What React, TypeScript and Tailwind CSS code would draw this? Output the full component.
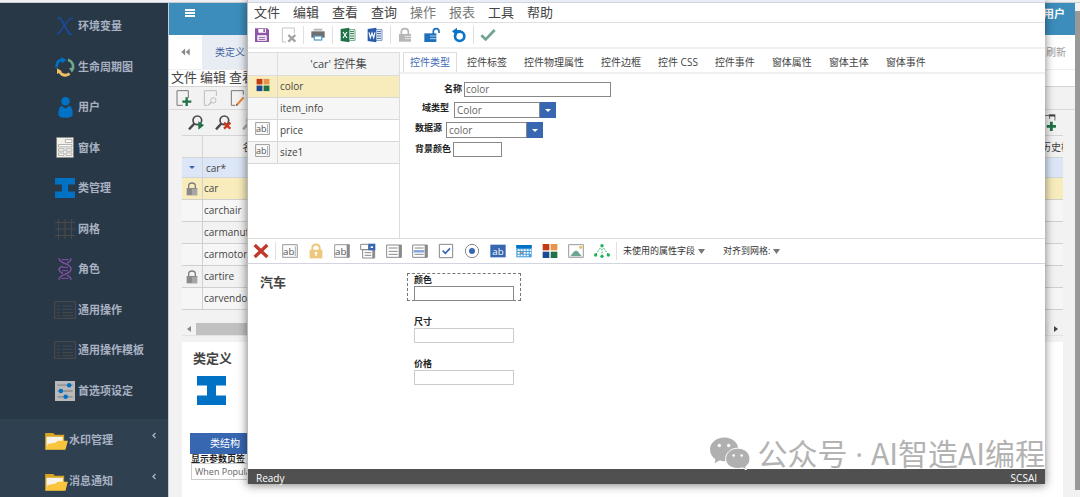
import React from 'react';
import { FaAngleLeft } from 'react-icons/fa';

type IconProps = { className?: string };

/* ---------- sidebar icons ---------- */

const VariableIcon = () => (
  <svg viewBox="0 0 54 54" className="h-[18px] w-[18px]" fill="none" stroke="#1b4a94">
    <path d="M5 5c5-4 9-2 11 3l22 40c3 5 7 5 11 2" strokeWidth="6" />
    <path d="M52 3c-8 0-14 3-20 13L18 36C12 46 9 51 2 51" strokeWidth="4.5" />
  </svg>
);
const CycleIcon = () => (
  <svg viewBox="0 0 60 60" className="h-5 w-5">
    <g fill="none" strokeWidth="8">
      <path d="M5 31C4 18 11 10 22 8" stroke="#0072c6" />
      <path d="M39 8c14 5 18 18 13 30" stroke="#6fa88c" />
      <path d="M44 50c-12 8-23 5-31-6" stroke="#edbf65" />
    </g>
    <path d="M19 0l15 9-13 10z" fill="#0072c6" />
    <path d="M42 33l17-1-8 15z" fill="#6fa88c" />
    <path d="M6 51V34l15 9z" fill="#edbf65" />
  </svg>
);
const UserIcon = () => (
  <svg viewBox="0 0 44 64" className="h-[21px] w-[15px]" fill="#0072c6">
    <circle cx="22" cy="13" r="13" />
    <path d="M10 27l12 8 12-8c6 2 10 12 10 26 0 14-44 14-44 0 0-14 4-24 10-26z" />
  </svg>
);
const FormIcon = () => (
  <svg viewBox="0 0 54 64" className="h-[21px] w-[18px]">
    <path d="M1 1h52v62H1z" fill="#f2f0ea" stroke="#77736a" strokeWidth="2" />
    <g fill="#fff" stroke="#8d8c88" strokeWidth="2">
      <path d="M28 8h20v9H28zM7 23h41v7H7zM7 36h17v7H7zM30 36h18v7H30zM7 49h17v7H7zM30 49h18v7H30z" />
    </g>
  </svg>
);
const BeamIcon = ({ className = 'h-5 w-5' }: IconProps) => (
  <svg viewBox="0 0 58 58" className={className} fill="#0072c6" preserveAspectRatio="none">
    <path d="M0 0h58v19H38v20h20v19H0V39h20V19H0z" />
  </svg>
);
const GridIcon = () => (
  <svg viewBox="0 0 58 58" className="h-5 w-5" stroke="#4a4a4a" strokeWidth="3">
    <path d="M10 0v58M29 0v58M48 0v58M0 10h58M0 29h58M0 48h58" />
  </svg>
);
const DnaIcon = () => (
  <svg viewBox="0 0 42 66" className="h-[22px] w-[14px]" fill="none" stroke="#8650a8" strokeWidth="4">
    <path d="M3 1c0 18 36 14 36 32S3 47 3 65" />
    <path d="M39 1c0 8-6 12-13 15M14 24C7 27 3 29 3 34c0 7 6 10 12 13M27 52c8 3 12 6 12 13" />
    <path d="M10 5h22M12 28h18M12 38h18M10 61h22" strokeWidth="3" />
  </svg>
);
const ListIcon = () => (
  <svg viewBox="0 0 66 54" className="h-[18px] w-[22px]" fill="none" stroke="#4c4d4e" strokeWidth="3">
    <path d="M2 2h62v50H2z" />
    <path d="M8 15h9M8 25h9M8 35h9M8 44h9M25 15h32M25 25h32M25 35h32M25 44h32" strokeWidth="2.5" />
  </svg>
);
const PrefsIcon = () => (
  <svg viewBox="0 0 58 58" className="h-5 w-5">
    <path d="M0 0h58v58H0z" fill="#b9b9b9" />
    <path d="M7 12h44M7 29h44M7 46h44" stroke="#8a8a8a" strokeWidth="4" />
    <g fill="#0072c6">
      <circle cx="41" cy="12" r="6.5" />
      <circle cx="17" cy="29" r="6.5" />
      <circle cx="31" cy="46" r="6.5" />
    </g>
  </svg>
);
const FolderIcon = () => (
  <svg viewBox="0 0 68 54" className="h-[18px] w-[23px]">
    <path d="M0 3h24l5 5h28v44H0z" fill="#d9a520" />
    <path d="M4 14h49v20L4 50z" fill="#f7f3e8" />
    <path d="M0 53l8-17 22-4 8-6h30l-7 27z" fill="#f8c53c" />
  </svg>
);

/* ---------- toolbar icons, all on a 48 unit grid ---------- */

const Svg = ({ children, className = 'h-4 w-4' }: React.PropsWithChildren<IconProps>) => (
  <svg viewBox="0 0 48 48" className={className} fill="none">
    {children}
  </svg>
);
const DocAdd = () => (
  <Svg>
    <path d="M20 46H3V2h34v22" stroke="#777" strokeWidth="3" />
    <path d="M32 22v26M19 35h27" stroke="#1f7246" strokeWidth="7" />
  </Svg>
);
const DocSearch = () => (
  <Svg>
    <path d="M14 46H4V2h36v16" stroke="#bdbdbd" strokeWidth="3" />
    <circle cx="31" cy="31" r="8" stroke="#bdbdbd" strokeWidth="3" />
    <path d="M25 37l-9 9" stroke="#bdbdbd" strokeWidth="4" />
  </Svg>
);
const DocEdit = () => (
  <Svg>
    <path d="M15 46H4V2h36v12" stroke="#777" strokeWidth="3" />
    <path d="M41 22L20 45" stroke="#e8853c" strokeWidth="6" />
    <path d="M17 48l2-7 5 5z" fill="#555" />
  </Svg>
);
const SearchBase = ({ color = '#4a4a4a' }: { color?: string }) => (
  <>
    <circle cx="28" cy="16" r="13" stroke={color} strokeWidth="5" />
    <path d="M19 26L3 43" stroke={color} strokeWidth="7" />
  </>
);
const SearchRun = () => (
  <Svg>
    <SearchBase />
    <path d="M31 19l17 12-17 13z" fill="#1f7246" />
  </Svg>
);
const SearchClear = () => (
  <Svg>
    <SearchBase />
    <path d="M27 23l19 18M46 23L27 41" stroke="#c8391f" strokeWidth="7" />
  </Svg>
);
const SearchPlain = () => (
  <Svg>
    <SearchBase color="#a8a8a8" />
  </Svg>
);
const ColumnAdd = () => (
  <Svg className="h-[17px] w-[17px]">
    <path d="M2 4h40M27 4v10M42 4v14" stroke="#777" strokeWidth="3" />
    <path d="M25 1h18v6H25z" fill="#444" />
    <path d="M32 22v26M19 35h26" stroke="#1f7246" strokeWidth="8" />
  </Svg>
);
const RowLock = () => (
  <svg viewBox="0 0 36 42" className="mx-auto h-[14px] w-3" fill="none">
    <path d="M8 18v-6c0-12 20-12 20 0v6" stroke="#7d7d7d" strokeWidth="4" />
    <path d="M2 18h32v22H2z" fill="#8a8a8a" />
    <path d="M18 24h18M18 30h18M18 36h18" stroke="#e0e0e0" strokeWidth="2" />
  </svg>
);
const SaveIcon = () => (
  <Svg>
    <path d="M3 4h37l5 5v36H3z" fill="#8e55a8" />
    <path d="M13 6h23v11H13zM10 25h28v16H10z" fill="#fff" />
    <path d="M28 7h5v8h-5z" fill="#8e55a8" />
    <path d="M14 31h20M14 37h20" stroke="#8e55a8" strokeWidth="3" />
  </Svg>
);
const DocDelete = () => (
  <Svg>
    <path d="M16 45H4V3h36v16" stroke="#c4c4c4" strokeWidth="3" />
    <path d="M22 24l21 20M43 24L22 44" stroke="#a2a2a2" strokeWidth="7" />
  </Svg>
);
const PrintIcon = () => (
  <Svg>
    <path d="M11 5h26v6H11z" fill="#b9b9b9" />
    <path d="M4 13h40v19H4z" fill="#6e6e6e" />
    <path d="M11 26h26v15H11z" fill="#5aa0cf" />
    <path d="M15 29h18v8H15z" fill="#fff" />
  </Svg>
);
const OfficeIcon = ({ color, glyph }: { color: string; glyph: string }) => (
  <Svg>
    <path d="M26 8h19v32H26z" stroke={color} strokeWidth="2" fill="#fff" />
    <path d="M30 14h12M30 20h12M30 27h12M30 34h12" stroke={color} strokeWidth="3" />
    <path d="M2 6l26-4v44L2 42z" fill={color} />
    <path d={glyph} stroke="#fff" strokeWidth="3.5" />
  </Svg>
);
const LockIcon = () => (
  <Svg>
    <path d="M13 22V14c0-12 21-12 21 0v8" stroke="#b5b5b5" strokeWidth="5" />
    <path d="M6 21h36v23H6z" fill="#b5b5b5" />
    <path d="M23 28h19M23 35h19" stroke="#fff" strokeWidth="2" />
  </Svg>
);
const UnlockIcon = () => (
  <Svg>
    <path d="M28 22v-9c0-11 17-11 17 0v5" stroke="#1f6fbd" strokeWidth="5" />
    <path d="M1 19h36v26H1z" fill="#1f6fbd" />
    <path d="M18 27h19M18 35h19" stroke="#fff" strokeWidth="2" />
  </Svg>
);
const RevertIcon = () => (
  <Svg>
    <circle cx="26" cy="28" r="14" stroke="#0b76c9" strokeWidth="8" />
    <path d="M3 13L18 2v7h12v9H18v8z" fill="#0b76c9" />
  </Svg>
);
const CheckIcon = () => (
  <Svg>
    <path d="M4 25l13 12L44 9" stroke="#6fa392" strokeWidth="8" />
  </Svg>
);
const DeleteIcon = () => (
  <Svg>
    <path d="M5 6l38 36M43 6L5 42" stroke="#c0392b" strokeWidth="10" />
  </Svg>
);
const AbIcon = ({ variant = 'cursor', className }: { variant?: 'cursor' | 'scroll' | 'fill'; className?: string }) => (
  <Svg className={className}>
    {variant === 'fill' ? (
      <path d="M1 5h46v38H1z" fill="#3767b1" />
    ) : (
      <path d="M2 5h44v38H2z" fill="#fbfbfb" stroke="#999" strokeWidth="3" />
    )}
    {variant === 'scroll' && <path d="M38 5h8v38h-8z" fill="#8a8a8a" />}
    {variant === 'cursor' && <path d="M40 10v29" stroke="#888" strokeWidth="2" />}
    <text
      x={variant === 'fill' ? 24 : 20}
      y="35"
      textAnchor="middle"
      fontSize="29"
      fontFamily="Open Sans, sans-serif"
      fill={variant === 'fill' ? '#fff' : '#555'}
    >
      ab
    </text>
  </Svg>
);
const PadlockIcon = () => (
  <Svg>
    <path d="M13 22v-6c0-15 22-15 22 0v6" stroke="#edc77e" strokeWidth="6" />
    <path d="M5 20h38v26H5z" fill="#edc77e" />
    <circle cx="24" cy="30" r="4" fill="#fff" />
    <path d="M24 30v9" stroke="#fff" strokeWidth="4" />
  </Svg>
);
const DropdownIcon = () => (
  <Svg>
    <path d="M2 4h24v16H2zM8 20h36v25H8z" fill="#fff" stroke="#8a8a8a" strokeWidth="3" />
    <path d="M14 29h20M14 37h20" stroke="#888" strokeWidth="3" />
    <path d="M37 20h7v25h-7z" fill="#888" />
    <path d="M25 2h21v20H25z" fill="#3767b1" />
    <path d="M32 10h7v5h-7z" fill="#fff" />
  </Svg>
);
const ListBoxIcon = ({ active = false }: { active?: boolean }) => (
  <Svg>
    <path d="M2 6h44v37H2z" fill="#fff" stroke="#8a8a8a" strokeWidth="3" />
    <path d="M8 15h27M8 25h27M8 34h27" stroke="#888" strokeWidth="3" />
    {active && <path d="M5 25h32" stroke="#7da3dc" strokeWidth="7" />}
    <path d="M38 6h8v37h-8z" fill="#8a8a8a" />
  </Svg>
);
const CheckboxIcon = () => (
  <Svg>
    <path d="M4 4h40v40H4z" fill="#fff" stroke="#888" strokeWidth="3" />
    <path d="M14 23l8 8 14-15" stroke="#3767b1" strokeWidth="5" />
  </Svg>
);
const RadioIcon = () => (
  <Svg>
    <circle cx="24" cy="24" r="20" fill="#fff" stroke="#888" strokeWidth="3" />
    <circle cx="24" cy="24" r="9" fill="#3767b1" />
  </Svg>
);
const CalendarIcon = () => (
  <Svg>
    <path d="M1 6h46v37H1z" fill="#4ba0dc" />
    <path d="M1 6h46v10H1z" fill="#0072c6" />
    <path d="M5 19h6v5H5zM14 19h6v5h-6zM23 19h6v5h-6zM32 19h6v5h-6zM41 19h4v5h-4zM5 27h6v5H5zM23 27h6v5h-6zM32 27h6v5h-6zM41 27h4v5h-4zM5 35h6v5H5zM14 35h6v5h-6zM23 35h6v5h-6zM32 35h6v5h-6z" fill="#fff" />
    <path d="M14 27h6v5h-6z" fill="#e8853c" />
  </Svg>
);
const ColorsIcon = ({ className }: IconProps) => (
  <Svg className={className}>
    <path d="M2 3h20v19H2z" fill="#c13c12" />
    <path d="M26 3h20v19H26z" fill="#e8924a" />
    <path d="M2 26h20v19H2z" fill="#1b4a94" />
    <path d="M26 26h20v19H26z" fill="#1f7246" />
  </Svg>
);
const ImageIcon = () => (
  <Svg>
    <path d="M2 5h44v38H2z" fill="#fff" stroke="#999" strokeWidth="3" />
    <path d="M6 40c8-8 11-17 18-17s10 9 18 17z" fill="#6fa392" />
    <circle cx="38" cy="13" r="5" fill="#edbf65" />
  </Svg>
);
const TreeIcon = () => (
  <Svg>
    <path d="M24 8L5 35M24 8l19 27M24 8v30" stroke="#1fb45a" strokeWidth="3" strokeDasharray="5 4" />
    <g fill="#1fb45a">
      <circle cx="24" cy="8" r="5" />
      <circle cx="5" cy="36" r="5" />
      <circle cx="24" cy="40" r="5" />
      <circle cx="43" cy="36" r="5" />
    </g>
  </Svg>
);
const ChatBubbles = () => (
  <svg viewBox="0 0 120 98" className="h-[33px] w-10 shrink-0">
    <path d="M43 1C19 1 0 16 0 37c0 12 6 22 16 29l-2 12 14-8c5 2 10 2 15 2 24 0 42-15 42-35S67 1 43 1z" fill="#b0b0b0" />
    <circle cx="28" cy="25" r="5" fill="#fff" />
    <circle cx="56" cy="25" r="5" fill="#fff" />
    <path d="M83 33c21 0 37 14 37 32 0 10-5 18-13 24l2 9-11-6c-5 2-10 2-15 2-21 0-36-12-36-29s15-32 36-32z" fill="#b0b0b0" stroke="#fff" strokeWidth="3" />
    <circle cx="71" cy="55" r="4" fill="#fff" />
    <circle cx="95" cy="55" r="4" fill="#fff" />
  </svg>
);
const Caret = ({ className = 'h-[5px] w-[7px]' }: IconProps) => (
  <svg viewBox="0 0 8 4" className={className} fill="currentColor" preserveAspectRatio="none">
    <path d="M0 0h8L4 4z" />
  </svg>
);

/* ---------- small building blocks ---------- */

const Tool = ({ label, children }: React.PropsWithChildren<{ label: string }>) => (
  <button type="button" aria-label={label} className="flex shrink-0 items-center justify-center">
    {children}
  </button>
);
const Separator = () => <span className="mx-1.5 h-[18px] w-px shrink-0 bg-[#e0e0e0]" />;

const navItems: [string, React.ReactNode][] = [
  ['环境变量', <VariableIcon />],
  ['生命周期图', <CycleIcon />],
  ['用户', <UserIcon />],
  ['窗体', <FormIcon />],
  ['类管理', <BeamIcon />],
  ['网格', <GridIcon />],
  ['角色', <DnaIcon />],
  ['通用操作', <ListIcon />],
  ['通用操作模板', <ListIcon />],
  ['首选项设定', <PrefsIcon />],
];

function Sidebar() {
  return (
    <nav className="flex w-[169px] shrink-0 flex-col border-r border-[#c3cdd6] bg-[#2f4050] text-[11px] font-bold text-[#a7b1c2]">
      <ul className="grid h-[416px] shrink-0 auto-rows-fr bg-[#293846] pt-[3px] pb-2">
        {navItems.map(([label, icon]) => (
          <li key={label} className="flex">
            <a href="#" className="flex flex-1 items-center pl-[54px]">
              <span className="flex w-6 shrink-0 justify-start">
                <span className="flex w-[22px] justify-center">{icon}</span>
              </span>
              {label}
            </a>
          </li>
        ))}
      </ul>
      {['水印管理', '消息通知'].map((label) => (
        <a key={label} href="#" className="flex h-[41px] shrink-0 items-center gap-px pt-0.5 pl-[45px] pr-[11px]">
          <FolderIcon />
          {label}
          <FaAngleLeft className="mb-[10px] ml-auto h-[9px] w-[6px]" />
        </a>
      ))}
    </nav>
  );
}

const classRows = [
  { name: 'car', locked: true },
  { name: 'carchair', locked: false },
  { name: 'carmanufacturer', locked: false },
  { name: 'carmotor', locked: false },
  { name: 'cartire', locked: true },
  { name: 'carvendor', locked: false },
];

function ClassPage() {
  return (
    <main className="flex min-w-0 flex-1 flex-col bg-[#f2f2f2] text-[#444]">
      <header className="flex h-8 shrink-0 items-start justify-between bg-[#3c8dbc] pl-4 pr-[10px] text-white">
        <button type="button" aria-label="菜单" className="mt-[6px] flex w-[10px] flex-col gap-[1px]">
          <span className="h-0.5 bg-white" />
          <span className="h-0.5 bg-white" />
          <span className="h-0.5 bg-white" />
        </button>
        <span className="mt-1 text-[11px] leading-[14px] font-bold">管理员用户</span>
      </header>
      <div className="flex h-[35px] shrink-0 items-stretch border-b border-[#eee] bg-white text-[10px]">
        <button type="button" aria-label="向左" className="flex w-[33px] items-center justify-center text-[#888]">
          <svg viewBox="0 0 28 24" className="h-2 w-[9px]" fill="currentColor">
            <path d="M13 1v22L1 12zM27 1v22L15 12z" />
          </svg>
        </button>
        <a href="#" className="flex w-24 items-center bg-[#e8edf4] pl-[13px] text-[#3f5f9e]">
          类定义
        </a>
        <button type="button" className="ml-auto pr-[9px] text-[#999]">
          刷新
        </button>
      </div>
      <div className="flex h-[17px] shrink-0 items-center gap-[3px] border-b border-[#d5d5d5] bg-white pl-0.5 text-[13px] leading-none">
        {['文件', '编辑', '查看', '查询'].map((m) => (
          <button type="button" key={m} className="-mt-0.5">
            {m}
          </button>
        ))}
      </div>
      <div className="flex h-[23px] shrink-0 items-center gap-[11px] border-b border-[#d9d9d9] pl-[7px]">
        <Tool label="新建"><DocAdd /></Tool>
        <Tool label="查看"><DocSearch /></Tool>
        <Tool label="编辑"><DocEdit /></Tool>
      </div>
      <div className="flex h-[25px] shrink-0 items-center gap-[11px] pl-[19px] pr-[18px]">
        <Tool label="运行查询"><SearchRun /></Tool>
        <Tool label="清除查询"><SearchClear /></Tool>
        <Tool label="停止查询"><SearchPlain /></Tool>
        <span className="flex-1" />
        <Tool label="添加列"><ColumnAdd /></Tool>
      </div>
      <div className="flex min-h-0 flex-1 flex-col pl-[13px] pr-3">
        <table className="w-full table-fixed border-separate border-spacing-0 text-[10px] leading-none">
          <colgroup>
            <col className="w-[21px]" />
            <col className="w-[99px]" />
            <col />
            <col className="w-[22px]" />
          </colgroup>
          <thead>
            <tr className="h-[23px]">
              <th className="border-y border-r border-[#d5d5d5]" />
              <th className="border-y border-[#d5d5d5] font-normal">名称</th>
              <th className="border-y border-[#d5d5d5]" />
              <th className="overflow-hidden border-y border-[#d5d5d5] text-left font-normal whitespace-nowrap">历史模板</th>
            </tr>
          </thead>
          <tbody>
            <tr className="h-5 bg-[#dce6f6]">
              <td className="border-r border-b border-[#d0d4dc] text-[#3767b1]">
                <Caret className="mx-auto h-[3px] w-[6px]" />
              </td>
              <td className="border-b border-[#d0d4dc] pl-[3px]">car*</td>
              <td className="border-b border-[#d0d4dc]" />
              <td className="border-b border-[#d0d4dc]" />
            </tr>
            {classRows.map(({ name, locked }) => (
              <tr key={name} className={name === 'car' ? 'h-[22px] bg-[#f8ecbd]' : 'h-[22px] odd:bg-[#f6f6f6]'}>
                <td className="border-r border-b border-[#d0d0d0]">{locked && <RowLock />}</td>
                <td className="border-b border-[#d0d0d0] pb-0.5 pl-px">{name}</td>
                <td className="border-b border-[#d0d0d0]" />
                <td className="border-b border-[#d0d0d0]" />
              </tr>
            ))}
          </tbody>
        </table>
        <div className="mt-[13px] flex h-[13px] shrink-0 items-center border-b border-[#e2e2e2]">
          <span className="flex w-[14px] justify-center text-[#888]">
            <Caret className="h-1 w-[6px] rotate-90" />
          </span>
          <span className="h-full flex-1 bg-[#c1c1c1]" />
          <span className="h-full w-24 bg-[#efefef]" />
          <span className="flex w-[14px] justify-center text-[#444]">
            <Caret className="h-1 w-[6px] -rotate-90" />
          </span>
        </div>
        <section className="mt-[6px] flex-1 overflow-hidden bg-white">
          <h2 className="mt-2 ml-[11px] text-[13px] leading-4 font-bold">类定义</h2>
          <BeamIcon className="mt-[10px] ml-[15px] h-[29px] w-[29px]" />
          <button type="button" className="mt-[28px] ml-2 block h-[21px] w-[70px] bg-[#3767b1] text-[10px] text-white">
            类结构
          </button>
          <div className="ml-[9px] flex flex-col items-start">
            <label htmlFor="paramTabs" className="text-[9px] leading-[9px] font-bold text-[#222]">
              显示参数页签
            </label>
            <input
              id="paramTabs"
              defaultValue="When Populated"
              className="h-[17px] w-32 border border-[#ccc] px-[3px] text-[9px] text-[#666]"
            />
          </div>
        </section>
      </div>
    </main>
  );
}

const menus = ['文件', '编辑', '查看', '查询', '操作', '报表', '工具', '帮助'];
const tabs = ['控件类型', '控件标签', '控件物理属性', '控件边框', '控件 CSS', '控件事件', '窗体属性', '窗体主体', '窗体事件'];
const controls = [
  { name: 'color', icon: <ColorsIcon className="mx-auto mb-1 h-[14px] w-[14px]" /> },
  { name: 'item_info', icon: null },
  { name: 'price', icon: <AbIcon className="mx-auto mb-1 h-[15px] w-[15px]" /> },
  { name: 'size1', icon: <AbIcon className="mx-auto mb-1 h-[15px] w-[15px]" /> },
];

function Select({ id, value, className }: { id: string; value: string; className: string }) {
  return (
    <span className={`flex ${className}`}>
      <select id={id} className="h-4 min-w-0 flex-1 appearance-none border border-[#888] bg-white px-0.5 text-[10px] leading-none text-[#666]">
        <option>{value}</option>
      </select>
      <span className="flex h-4 w-4 items-center justify-center bg-[#3767b1] text-white">
        <Caret className="h-[3px] w-[6px]" />
      </span>
    </span>
  );
}

function PropertyForm() {
  return (
    <form className="flex flex-col gap-1 pt-2 text-[9px] font-bold text-[#222]">
      <div className="flex h-4 items-start gap-0.5 pl-[44px]">
        <label htmlFor="name">名称</label>
        <input id="name" defaultValue="color" className="h-[15px] w-[147px] border border-[#888] px-px text-[10px] font-normal text-[#666]" />
      </div>
      <div className="flex h-4 items-center gap-[5px] pl-[22px]">
        <label htmlFor="fieldType" className="pb-1">域类型</label>
        <Select id="fieldType" value="Color" className="w-[102px] font-normal" />
      </div>
      <div className="flex h-4 items-center gap-1 pl-[15px]">
        <label htmlFor="dataSource" className="pb-1">数据源</label>
        <Select id="dataSource" value="color" className="w-[97px] font-normal" />
      </div>
      <div className="flex h-4 items-start gap-0.5 pl-[15px]">
        <label htmlFor="background">背景颜色</label>
        <input id="background" className="h-[15px] w-[49px] border border-[#888] font-normal" />
      </div>
    </form>
  );
}

function DesignField({ label, selected = false }: { label: string; selected?: boolean }) {
  return (
    <div className={`flex h-7 w-[114px] flex-col items-start border border-dashed px-[6px] ${selected ? 'border-[#777]' : 'border-transparent'}`}>
      <label htmlFor={label} className="text-[9px] leading-3 font-bold text-[#222]">
        {label}
      </label>
      <input id={label} className={`h-[15px] w-full shrink-0 border ${selected ? 'border-[#888]' : 'border-[#ccc]'}`} />
    </div>
  );
}

function FormDesigner() {
  return (
    <div
      role="dialog"
      aria-label="car"
      className="absolute top-0 right-[35px] bottom-[13px] left-[247px] flex flex-col border-l border-[#bbb] bg-white text-[#444] shadow-[0_1px_9px_rgba(0,0,0,0.5)]"
    >
      <div className="h-[3px] shrink-0 border-b border-[#cfd6de] bg-[#e9eef6]" />
      <div className="flex h-5 shrink-0 items-center gap-[13px] border-b border-[#e0e0e0] pl-[6px] text-[13px] leading-none">
        {menus.map((m) => (
          <button type="button" key={m} className={m === '操作' || m === '报表' ? 'text-[#777]' : ''}>
            {m}
          </button>
        ))}
      </div>
      <div className="flex h-[26px] shrink-0 items-center border-b-2 border-[#f0f0f0] pl-[6px]">
        <div className="flex gap-[11px]">
          <Tool label="保存"><SaveIcon /></Tool>
          <Tool label="删除"><DocDelete /></Tool>
        </div>
        <Separator />
        <Tool label="打印"><PrintIcon /></Tool>
        <Separator />
        <div className="flex gap-[11px] px-px">
          <Tool label="导出到 Excel"><OfficeIcon color="#1f7246" glyph="M9 15l12 18M21 15L9 33" /></Tool>
          <Tool label="导出到 Word"><OfficeIcon color="#2b5ba8" glyph="M6 16l4 16 5-14 5 14 4-16" /></Tool>
        </div>
        <Separator />
        <div className="flex gap-[11px]">
          <Tool label="锁定"><LockIcon /></Tool>
          <Tool label="解锁"><UnlockIcon /></Tool>
          <Tool label="撤消"><RevertIcon /></Tool>
        </div>
        <Separator />
        <Tool label="完成"><CheckIcon /></Tool>
      </div>

      <div className="flex h-[190px] shrink-0 border-b border-[#dcdcdc] pt-[3px]">
        <div className="w-[152px] shrink-0 border-r border-[#ddd]">
          <table className="w-full table-fixed border-separate border-spacing-0 text-[10px] leading-none">
            <thead>
              <tr className="h-6 bg-[#f4f4f4] text-[11px]">
                <th className="w-[30px] border-t border-r border-b border-[#ddd]" />
                <th className="border-y border-[#ddd] pb-0.5 font-normal">'car' 控件集</th>
              </tr>
            </thead>
            <tbody>
              {controls.map(({ name, icon }) => (
                <tr key={name} className={name === 'color' ? 'h-[22px] bg-[#f8ecbd]' : 'h-[22px] even:bg-[#f6f6f6]'}>
                  <td className="border-r border-b border-[#d8d8d8]">{icon}</td>
                  <td className="border-b border-[#d8d8d8] pb-0.5 pl-0.5">{name}</td>
                </tr>
              ))}
            </tbody>
          </table>
        </div>
        <div className="min-w-0 flex-1">
          <div role="tablist" className="flex h-[22px] gap-[3px] border-b-2 border-[#f0f0f0] pl-[3px] text-[10px] whitespace-nowrap">
            {tabs.map((t, i) => (
              <button
                type="button"
                role="tab"
                key={t}
                className={`border border-b-0 px-[6px] ${i === 0 ? 'border-[#ddd] text-[#3f69b5]' : 'border-transparent'}`}
              >
                {t}
              </button>
            ))}
          </div>
          <PropertyForm />
        </div>
      </div>

      <div className="flex h-[25px] shrink-0 items-center border-b border-[#d3d5de] pl-[5px] text-[9px] text-[#333]">
        <Tool label="移除"><DeleteIcon /></Tool>
        <Separator />
        <div className="flex gap-[10px]">
          <Tool label="文本框"><AbIcon /></Tool>
          <Tool label="密码框"><PadlockIcon /></Tool>
          <Tool label="多行文本"><AbIcon variant="scroll" /></Tool>
          <Tool label="下拉列表"><DropdownIcon /></Tool>
          <Tool label="列表框"><ListBoxIcon /></Tool>
          <Tool label="筛选列表"><ListBoxIcon active /></Tool>
          <Tool label="复选框"><CheckboxIcon /></Tool>
          <Tool label="单选框"><RadioIcon /></Tool>
          <Tool label="标签"><AbIcon variant="fill" /></Tool>
          <Tool label="日期"><CalendarIcon /></Tool>
          <Tool label="颜色"><ColorsIcon /></Tool>
          <Tool label="图片"><ImageIcon /></Tool>
          <Tool label="嵌套窗体"><TreeIcon /></Tool>
        </div>
        <Separator />
        <button type="button" className="flex items-center gap-[3px]">
          未使用的属性字段
          <Caret className="h-[5px] w-[7px] text-[#777]" />
        </button>
        <button type="button" className="ml-[18px] flex items-center gap-[3px]">
          对齐到网格:
          <Caret className="h-[5px] w-[7px] text-[#777]" />
        </button>
      </div>

      <div className="flex min-h-0 flex-1">
        <h1 className="w-[159px] shrink-0 pt-[10px] pl-3 text-[13px] leading-4 font-bold">汽车</h1>
        <div className="flex flex-col gap-[14px] pt-[9px]">
          <DesignField label="颜色" selected />
          <DesignField label="尺寸" />
          <DesignField label="价格" />
        </div>
      </div>

      <footer className="flex h-[15px] shrink-0 items-end justify-between bg-[#505050] pr-2 pl-2 text-[10px] leading-[11px] font-medium text-white">
        <span>Ready</span>
        <span>SCSAI</span>
      </footer>

      <div className="pointer-events-none absolute right-0 bottom-[14px] flex items-center gap-[7px] text-[30px] leading-8 whitespace-nowrap text-[#b3b3b3]">
        <ChatBubbles />
        <span className="font-['Noto_Sans_CJK_SC',sans-serif]">
          公众号<span className="font-['Open_Sans',sans-serif]"> · </span>AI智造AI编程
        </span>
      </div>
    </div>
  );
}

export default function App() {
  return (
    <div className="relative flex h-screen flex-col overflow-hidden bg-white font-['Open_Sans','Noto_Sans_CJK_SC',sans-serif]">
      <div className="h-[3px] shrink-0 border-b border-[#c9ccd0] bg-[#eef0f2]" />
      <div className="flex min-h-0 flex-1">
        <Sidebar />
        <ClassPage />
        <div className="w-[5px] shrink-0 bg-[#f2f2f2] pt-2 pb-[7px]">
          <div className="h-full bg-[#999]" />
        </div>
      </div>
      <FormDesigner />
    </div>
  );
}
